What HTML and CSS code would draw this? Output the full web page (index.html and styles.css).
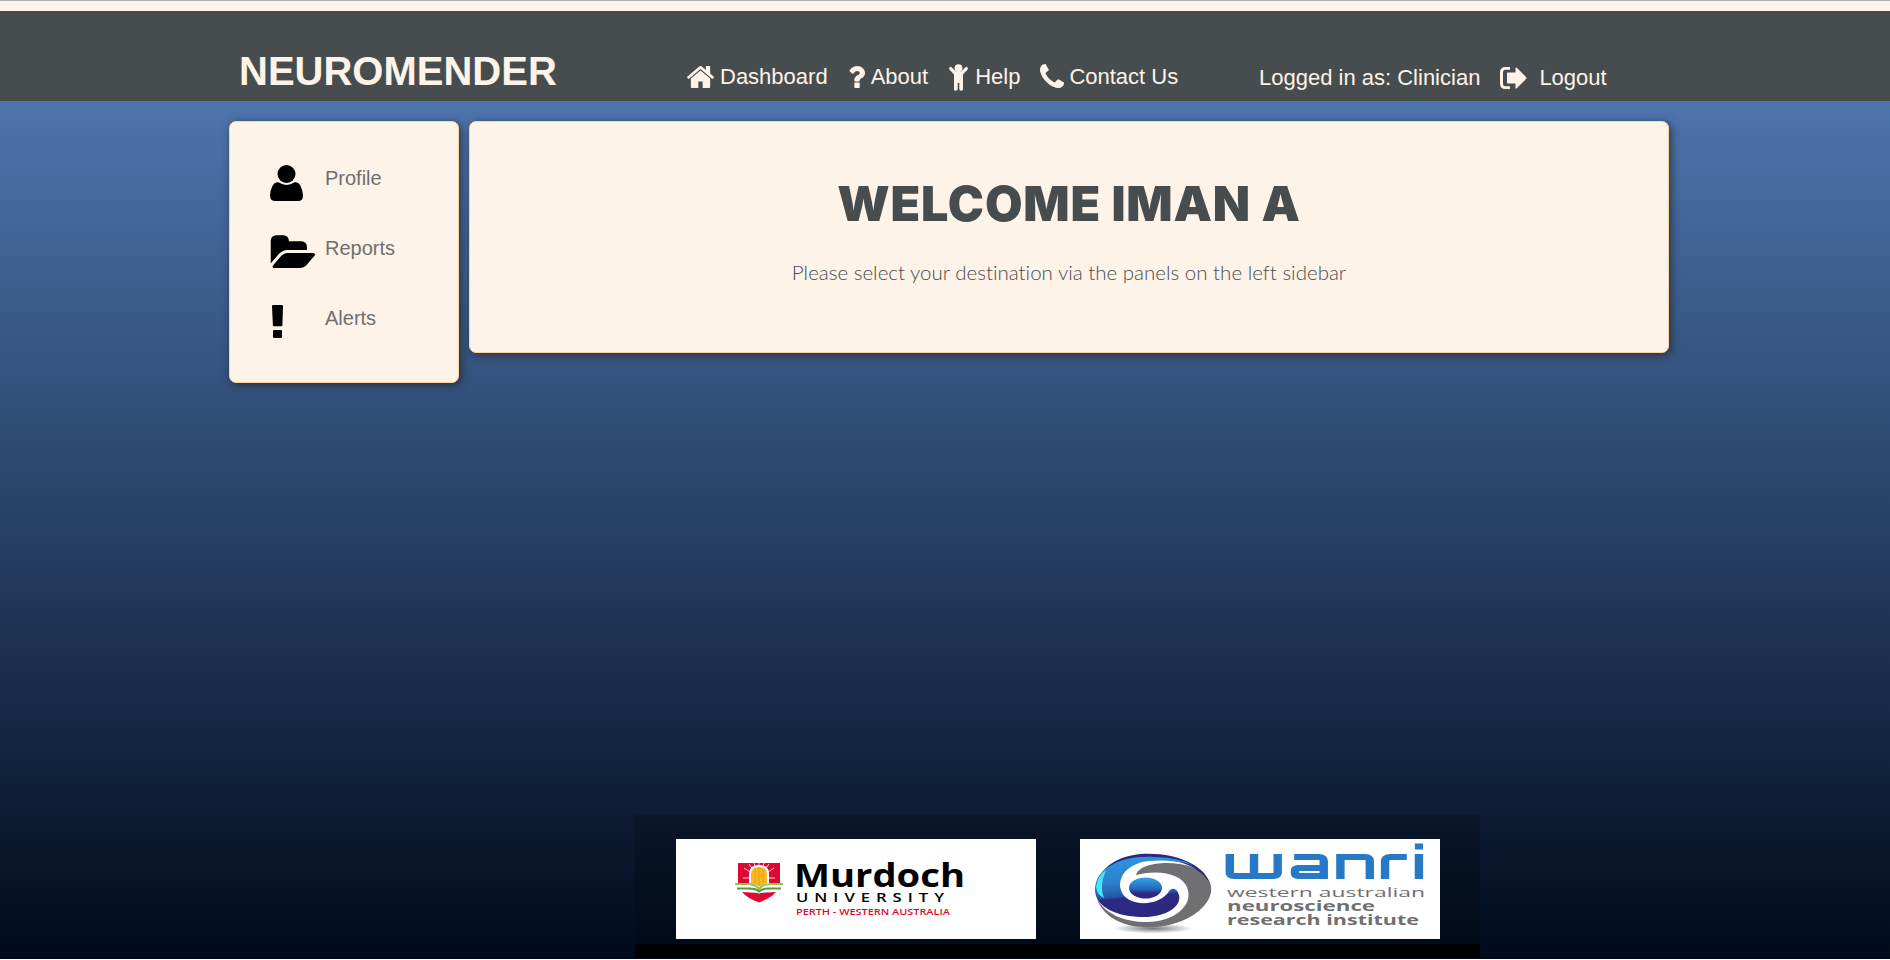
FILE: index.html
```html
<!DOCTYPE html>
<html lang="en">
<head>
<meta charset="utf-8">
<title>Neuromender</title>
<link rel="stylesheet" href="styles.css">
</head>
<body>
<header class="topbar">
  <div class="brand">NEUROMENDER</div>
  <nav class="nav">
    <a class="nav-home"><svg width="27" height="22" viewBox="89 253 1614 1283" preserveAspectRatio="none"><path d="M1472 992v480q0 26-19 45t-45 19h-384v-384h-256v384h-384q-26 0-45-19t-19-45v-480q0-1 .5-3t.5-3l575-474 575 474q1 2 1 6zm223-69l-62 74q-8 9-21 11h-3q-13 0-21-7l-692-577-692 577q-12 8-24 7-13-2-21-11l-62-74q-8-10-7-23.5t11-21.5l719-599q32-26 76-26t76 26l244 204v-195q0-14 9-23t23-9h192q14 0 23 9t9 23v408l219 182q10 8 11 21.5t-7 23.5z"/></svg><span>Dashboard</span></a>
    <a class="nav-about"><svg width="16" height="22" viewBox="448 256 956 1280" preserveAspectRatio="none"><path d="M1088 1256v240q0 16-12 28t-28 12h-240q-16 0-28-12t-12-28v-240q0-16 12-28t28-12h240q16 0 28 12t12 28zm316-600q0 54-15.5 101t-35 76.5-55 59.5-57.5 43.5-61 35.5q-41 23-68.5 65t-27.5 67q0 17-12 32.5t-28 15.5h-240q-15 0-25.5-18.5t-10.5-37.5v-45q0-83 65-156.5t143-108.5q59-27 84-56t25-76q0-42-46.5-74t-107.5-32q-65 0-108 29-35 25-107 115-13 16-31 16-12 0-25-8l-164-125q-13-10-15.5-25t5.5-28q160-266 464-266 80 0 161 31t146 83 106 127.5 41 158.5z"/></svg><span>About</span></a>
    <a class="nav-help"><svg width="19" height="27" viewBox="0 0 19 27"><circle cx="9.500" cy="4.200" r="3.900"/><path d="M.5 3.500Q1.500 2.300 2.800 3.400L7 7.800h5l4.200-4.400q1.300-1.100 2.300.1.900 1.200-.1 2.300L14 10.500V25q0 1.800-1.800 1.800T10.300 25v-6H8.700v6q0 1.800-1.900 1.800T5 25V10.500L.6 5.800Q-.4 4.700.5 3.500z"/></svg><span>Help</span></a>
    <a class="nav-contact"><svg width="24" height="24" viewBox="192 128 1408 1408"><path d="M1600 1240q0 27-10 70.500t-21 68.500q-21 50-122 106-94 51-186 51-27 0-53-3.500t-57.500-12.500-47-14.500-55.500-20.500-49-18q-98-35-175-83-127-79-264-216t-216-264q-48-77-83-175-3-9-18-49t-20.500-55.500-14.500-47-12.500-57.500-3.500-53q0-92 51-186 56-101 106-122 25-11 68.500-21t70.500-10q14 0 21 3 18 6 53 76 11 19 30 54t35 63.500 31 53.500q3 4 17.500 25t21.500 35.500 7 28.500q0 20-28.500 50t-62 55-62 53-28.500 46q0 9 5 22.500t8.500 20.500 14 24 11.500 19q76 137 174 235t235 174q2 1 19 11.500t24 14 20.500 8.500 22.500 5q18 0 46-28.500t53-62 55-62 50-28.500q14 0 28.500 7t35.500 21.500 25 17.500q25 15 53.500 31t63.500 35 54 30q70 35 76 53 3 7 3 21z"/></svg><span>Contact Us</span></a>
  </nav>
  <div class="session">
    <span>Logged in as: Clinician</span>
    <a class="logout"><svg width="27" height="22" viewBox="0 0 27 22"><path d="M10 0v2.800H5.500Q3 2.800 3 5.300v11.400q0 2.500 2.500 2.500H10V22H5.500Q0 22 0 16.500v-11Q0 0 5.500 0z"/><path d="M7 6.500q0-1 1-1h7.500V1.300q0-1.500 1.300-.5l9.400 9.400q.8.800 0 1.600l-9.400 9.400q-1.300 1-1.300-.5v-4.200H8q-1 0-1-1z"/></svg><span>Logout</span></a>
  </div>
</header>
<div class="content">
  <aside class="panel sidebar">
    <a class="side-item"><svg width="33" height="36" viewBox="0 0 33 36"><circle cx="16.500" cy="9" r="9"/><path d="M8.500 17.300q8 5.200 16 0 4.300-.3 6.300 4.200T33 30.500q0 5.500-5 5.500H5.500Q0 36 0 30.500 0 26 2.200 21.500t6.300-4.200z"/></svg><span>Profile</span></a>
    <a class="side-item"><svg width="45" height="33" viewBox="32 119 1911 1417" preserveAspectRatio="none"><path d="M1943 952q0 31-31 66l-336 396q-43 51-120.500 86.500t-143.500 35.500h-1088q-34 0-60.500-13t-26.500-43q0-31 31-66l336-396q43-51 120.500-86.500t143.500-35.500h1088q34 0 60.500 13t26.500 43zm-343-344v160h-832q-94 0-197 47.500t-164 119.500l-337 396-5 6q0-4-.5-12.500t-.5-12.500v-960q0-92 66-158t158-66h320q92 0 158 66t66 158v32h544q92 0 158 66t66 158z"/></svg><span>Reports</span></a>
    <a class="side-item"><svg width="15" height="33" viewBox="0 0 15 33"><path d="M3.200 0h8.600q1.200 0 1.200 1.200L12.400 20q0 1.200-1.200 1.200H4.100q-1.200 0-1.200-1.200L2 1.200Q2 0 3.200 0zM4.200 25h6.600q1.200 0 1.200 1.200v5.600q0 1.200-1.200 1.200H4.200Q3 33 3 31.800v-5.600Q3 25 4.200 25z"/></svg><span>Alerts</span></a>
  </aside>
  <main class="panel welcome">
    <h1>WELCOME IMAN A</h1>
    <p>Please select your destination via the panels on the left sidebar</p>
  </main>
</div>
<footer class="sponsors">
  <div class="logo">
    <svg width="360" height="100" viewBox="0 0 360 100">
      <path fill="#dc0a32" d="M62 24h42v20H62zM66 53l17 1 17-1q-5 6-17 10.500Q71 59 66 53z"/>
      <g stroke="#fff" stroke-width=".8"><path d="M83 39L68 29M83 39L98 29M83 39L73 25M83 39L93 25M83 39H67M83 39H99M83 39L78 24M83 39L88 24M83 39V24"/></g>
      <path fill="#fff" d="M73 48V35q0-9 10-9t10 9v13l-10 5z"/>
      <path fill="#fbb81f" d="M75 46V36q0-8 8-8t8 8v10l-8 6z"/>
      <path stroke="#e59a12" stroke-width=".8" d="M79 30v17M83 28v22M87 30v17"/>
      <path fill="none" stroke="#fff" stroke-width="5" d="M60 47h13q7 0 10 4 3-4 10-4h13"/>
      <path fill="none" stroke="#8fc84a" stroke-width="2" d="M59 45h11q10 0 13 5 3-5 13-5h11"/>
      <path fill="none" stroke="#569b3a" stroke-width="2" d="M61 49.500h12q7 0 10 3 3-3 10-3h12"/>
      <text class="murdoch" x="118" y="47.500" textLength="171" lengthAdjust="spacingAndGlyphs">Murdoch</text>
      <text class="university" x="120" y="62.500" textLength="154" lengthAdjust="spacingAndGlyphs">UNIVERSITY</text>
      <text class="perth" x="120" y="76" textLength="154" lengthAdjust="spacingAndGlyphs">PERTH - WESTERN AUSTRALIA</text>
    </svg>
  </div>
  <div class="logo">
    <svg width="360" height="100" viewBox="0 0 360 100">
      <defs>
        <linearGradient id="ring" x1="0" y1="0" x2=".15" y2="1"><stop offset="0" stop-color="#2f97e0"/><stop offset=".45" stop-color="#2a80cc"/><stop offset=".68" stop-color="#2557a5"/><stop offset=".72" stop-color="#2c2a85"/><stop offset="1" stop-color="#2c2880"/></linearGradient>
        <linearGradient id="ball" x1="0" y1="0" x2="0" y2="1"><stop offset="0" stop-color="#37a3e8"/><stop offset=".55" stop-color="#2368b8"/><stop offset=".75" stop-color="#2d2883"/></linearGradient>
        <radialGradient id="shade"><stop offset="0" stop-color="#777"/><stop offset="1" stop-color="#fff"/></radialGradient>
      </defs>
      <ellipse cx="73" cy="89.500" rx="40" ry="5" fill="url(#shade)"/>
      <path fill="#706f71" d="M17 60C30 95 84 93 110 78C138 62 138 38 112 28C92 21 60 23 56 36C80 30 101 35 107 48C115 68 91 83 68 83C43 83 26 75 17 60z"/>
      <path fill="#2c2880" d="M16 43C30 14 63 12 91 17C112 22 126 32 129 43C117 24 91 19 69 20C43 20 25 29 16 43z"/>
      <path fill="url(#ring)" d="M15 51C15 29 42 16 74 18Q96 18 113 26Q91 20 69 22C47 24 37 39 41 51C45 67 78 70 90 51Q96 47 99 56C102 68 85 78 64 78C37 78 15 68 15 51z"/>
      <path fill="#48e4fa" d="M16 48Q18 36 26 31Q19 47 24 59Q17 56 16 48z"/>
      <ellipse cx="65.500" cy="49" rx="16.500" ry="10.500" fill="url(#ball)"/>
      <g transform="scale(1.400 1)" fill="none" stroke="#2779c5" stroke-width="6"><path d="M107 15v19q0 3 3 3h28.200q3 0 3-3V15M124.300 15v22M153 18h17.500q3.600 0 3.600 4v15H156q-2.500 0-2.500-3v-2q0-3 2.500-3h18M186 40V18h17.500q3.500 0 3.500 4v18M217.900 40V23q0-5 4-5h11.500M242.100 15v25M239.200 7.500h5.800"/></g>
      <g class="institute"><text x="147" y="58" textLength="198" lengthAdjust="spacingAndGlyphs">western australian</text>
      <g class="strong"><text x="147" y="72" textLength="148" lengthAdjust="spacingAndGlyphs">neuroscience</text>
      <text x="147" y="85.500" textLength="192" lengthAdjust="spacingAndGlyphs">research institute</text></g></g>
    </svg>
  </div>
</footer>
</body>
</html>
```
FILE: styles.css
```css
* { box-sizing: border-box; }
html { height: 100%; background: #fff; }
body {
  margin: 0;
  height: 959px;
  display: flex;
  flex-direction: column;
  border-top: 1px solid #b5b1b3;
  background: linear-gradient(#4f79b3 0, #4d75ad 100px, #000a1b 957px) no-repeat;
  font-family: "Liberation Sans", Arial, sans-serif;
}
svg { display: block; flex: none; fill: currentColor; }
.topbar {
  height: 100px;
  flex: none;
  display: flex;
  align-items: flex-start;
  border-top: 10px solid #fdf3e8;
  background: #474d4f;
  color: #fdf3e8;
  font-size: 22px;
  line-height: 26px;
  white-space: nowrap;
}
.brand { width: 448px; margin: 37px 0 0 239px; font-size: 40px; line-height: 46px; font-weight: bold; }
.nav { display: flex; width: 572px; margin-top: 53px; }
.nav a { display: flex; align-items: flex-start; }
.nav-home svg { margin: 2px 6px 0 0; }
.nav-about { margin-left: 21px; }
.nav-about svg { margin: 2px 6px 0 0; }
.nav-help { margin-left: 21px; }
.nav-help svg { margin: 0 7px 0 0; }
.nav-contact { margin-left: 20px; }
.nav-contact svg { margin: 0 5px 0 0; }
.session { display: flex; margin-top: 54px; }
.logout { display: flex; margin-left: 20px; }
.logout svg { margin: 2px 12px 0 0; }
.content { display: flex; align-items: flex-start; gap: 10px; margin: 20px 0 0 229px; }
.panel {
  background: #fdf3e8;
  border: 1px solid #f6d3a0;
  border-radius: 7px;
  box-shadow: 2px 2px 8px rgba(40, 40, 40, .8);
}
.sidebar { width: 230px; height: 262px; padding: 43px 0 0 40px; font-size: 20px; }
.side-item { display: flex; height: 70px; color: #000; }
.side-item span { width: 130px; margin-left: auto; margin-right: 3px; padding-top: 1px; line-height: 24px; color: #706f6f; }
.welcome { width: 1200px; height: 232px; padding: 52px 0 0; text-align: center; }
.welcome h1 { margin: 0; font: 900 48.500px/60px Inter, sans-serif; color: #474d4f; letter-spacing: .8px; }
.welcome p { margin: 22px 0 0; font: 300 20.500px/32px Lato, sans-serif; font-variant-ligatures: none; color: #474d4f; }
.sponsors {
  display: flex;
  flex: none;
  gap: 44px;
  width: 845px;
  height: 143px;
  margin: auto 0 1px 635px;
  padding: 24px 41px 0;
  background: linear-gradient(rgba(0, 7, 14, .28) 0 129px, #000 129px);
}
.logo { width: 360px; height: 100px; background: #fff; }
.murdoch { font: 700 33px "Open Sans", sans-serif; fill: #000; }
.university { font: 600 12.500px "Open Sans", sans-serif; letter-spacing: 4.500px; fill: #000; }
.perth { font: 600 8.800px "Open Sans", sans-serif; fill: #dc0a32; }
.institute { font: 500 13.500px "Open Sans", sans-serif; fill: #706f71; }
.strong { font-weight: 700; }
```
